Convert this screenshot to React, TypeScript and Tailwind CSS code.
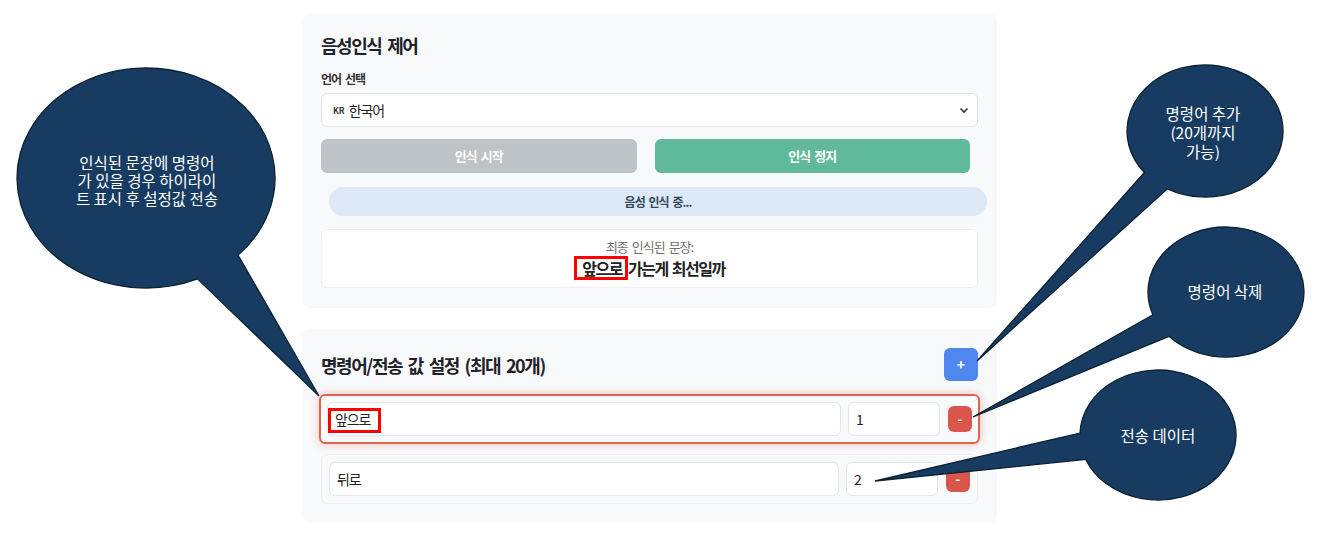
import React from "react";

// callout bubbles drawn over the screen (annotation layer)
type Callout = {
  cx: number;
  cy: number;
  rx: number;
  ry: number;
  a1: number; // tail base, degrees (a1 < a2)
  a2: number;
  tip: [number, number];
  lines: string[];
  tx: number;
  ty: number;
  lh: number;
};

const callouts: Callout[] = [
  {
    cx: 146, cy: 178, rx: 129, ry: 110, a1: 44.5, a2: 66.5, tip: [319, 396],
    lines: ["인식된 문장에 명령어", "가 있을 경우 하이라이", "트 표시 후 설정값 전송"],
    tx: 147, ty: 162, lh: 18,
  },
  {
    cx: 1205, cy: 131, rx: 78, ry: 66, a1: 118.8, a2: 141, tip: [977, 361],
    lines: ["명령어 추가", "(20개까지", "가능)"],
    tx: 1203, ty: 113, lh: 19,
  },
  {
    cx: 1226, cy: 292, rx: 78, ry: 65, a1: 137, a2: 159.5, tip: [973, 417],
    lines: ["명령어 삭제"],
    tx: 1225, ty: 291, lh: 18,
  },
  {
    cx: 1158, cy: 435, rx: 78, ry: 65, a1: 157.9, a2: 181.7, tip: [875, 481],
    lines: ["전송 데이터"],
    tx: 1158, ty: 435, lh: 18,
  },
];

function onEllipse(c: Callout, deg: number) {
  const r = (deg * Math.PI) / 180;
  return [c.cx + c.rx * Math.cos(r), c.cy + c.ry * Math.sin(r)];
}

function bubblePath(c: Callout) {
  const [x1, y1] = onEllipse(c, c.a2);
  const [x2, y2] = onEllipse(c, c.a1);
  return `M ${x1} ${y1} A ${c.rx} ${c.ry} 0 1 1 ${x2} ${y2} L ${c.tip[0]} ${c.tip[1]} Z`;
}

function Annotations() {
  return (
    <>
      <svg className="pointer-events-none absolute left-0 top-0" width={1317} height={536} viewBox="0 0 1317 536">
        {callouts.map((c, i) => (
          <path key={i} d={bubblePath(c)} fill="#183c61" stroke="#0b2233" strokeWidth={1.3} />
        ))}
      </svg>
      {callouts.map((c, i) => (
        <div
          key={i}
          className="pointer-events-none absolute w-[240px] text-center text-[15.5px] text-white"
          style={{ left: c.tx - 120, top: c.ty - c.lh / 2, lineHeight: `${c.lh}px` }}
        >
          {c.lines.map((l, j) => (
            <React.Fragment key={j}>
              {j > 0 && <br />}
              {l}
            </React.Fragment>
          ))}
        </div>
      ))}
    </>
  );
}

function CommandRow({ word, value, active }: { word: string; value: string; active?: boolean }) {
  return (
    <div
      className={
        active
          ? "-mx-[2px] flex items-center gap-[7px] rounded-md border-2 border-[#e0654f] bg-[#f8f9fb] px-[6px] py-[6px] shadow-[0_0_8px_rgba(231,76,60,0.35)]"
          : "flex items-center gap-[7px] rounded-md border border-[#eceef1] px-[7px] py-[7px]"
      }
    >
      <div className="relative min-w-0 flex-1">
        <input
          readOnly
          value={word}
          className="h-[34px] w-full rounded-md border border-[#e3e6ea] bg-white px-[7px] text-[14px] tracking-[-0.08em] text-[#222] outline-none"
        />
        {active && <span className="absolute left-[1px] top-[6px] h-[25px] w-[53px] border-[3px] border-[#ff0000]" />}
      </div>
      <input
        readOnly
        value={value}
        className="h-[34px] w-[92px] rounded-md border border-[#e3e6ea] bg-white px-[7px] text-[14px] text-[#222] outline-none"
      />
      <button className="ml-px flex h-[26px] w-6 items-center justify-center rounded-md bg-[#d9574a] text-[13px] font-bold text-white">
        -
      </button>
    </div>
  );
}

export default function App() {
  return (
    <div className="relative h-[536px] w-[1317px] overflow-hidden bg-white font-['Noto_Sans_CJK_KR','Noto_Sans',sans-serif] text-[#222]">
      <div className="ml-[302px] flex w-[695px] flex-col gap-[21px] pt-[13px]">
        {/* voice recognition control */}
        <section className="rounded-lg bg-[#f8f9fb] px-[19px] py-[20px]">
          <h2 className="text-[18px] font-bold leading-[24px] tracking-[-0.08em] text-[#1f2328] [word-spacing:0.17em]">
            음성인식 제어
          </h2>
          <div className="mt-[13px] text-[12px] font-bold leading-[18px] tracking-[-0.08em] text-[#333] [word-spacing:0.17em]">
            언어 선택
          </div>
          <div className="mt-[5px] flex h-[34px] items-center rounded-md border border-[#dfe3e8] bg-white pl-[11px] pr-[8px]">
            <span className="mr-[4px] text-[8.5px] font-bold text-[#333]">KR</span>
            <span className="text-[14px] tracking-[-0.08em] text-[#222]">한국어</span>
            <svg className="ml-auto" width="10" height="7" viewBox="0 0 10 7">
              <path d="M1.5 1.5l3.5 3.5 3.5-3.5" fill="none" stroke="#333" strokeWidth="1.6" />
            </svg>
          </div>
          <div className="mt-[12px] flex gap-[18px] pr-[8px]">
            <button className="h-[34px] flex-1 rounded-md bg-[#bec3c7] text-[13px] font-bold tracking-[-0.08em] text-white [word-spacing:0.17em]">
              인식 시작
            </button>
            <button className="h-[34px] flex-1 rounded-md bg-[#61b99b] text-[13px] font-bold tracking-[-0.08em] text-white [word-spacing:0.17em]">
              인식 정지
            </button>
          </div>
          <div className="-mr-[9px] ml-[8px] mt-[14px] flex h-[29px] items-center justify-center rounded-full bg-[#dce8f5] text-[12px] font-bold tracking-[-0.08em] text-[#34495e] [word-spacing:0.17em]">
            음성 인식 중...
          </div>
          <div className="mt-[13px] flex h-[59px] flex-col items-center justify-center rounded-md border border-[#eceef1] bg-white">
            <div className="text-[13px] leading-[18px] tracking-[-0.08em] text-[#707070] [word-spacing:0.17em]">
              최종 인식된 문장:
            </div>
            <div className="text-[16px] font-bold leading-[24px] tracking-[-0.09em] text-[#222] [word-spacing:0.1em]">
              <span className="inline-block border-[3px] border-[#ff0000] pl-[5px] pr-[3px] leading-[18px]">앞으로</span>
              가는게 최선일까
            </div>
          </div>
        </section>

        {/* command / value settings */}
        <section className="rounded-lg bg-[#f8f9fb] px-[19px] py-[19px]">
          <div className="flex items-center justify-between">
            <h2 className="text-[18px] font-bold leading-[24px] tracking-[-0.08em] text-[#1f2328] [word-spacing:0.17em]">
              명령어/전송 값 설정 (최대 20개)
            </h2>
            <button className="flex h-[33px] w-[34px] items-center justify-center rounded-md bg-[#4f86ef] text-[14px] font-bold text-white">
              +
            </button>
          </div>
          <div className="mt-[13px] flex flex-col gap-[10px]">
            <CommandRow word="앞으로" value="1" active />
            <CommandRow word="뒤로" value="2" />
          </div>
        </section>
      </div>
      <Annotations />
    </div>
  );
}
